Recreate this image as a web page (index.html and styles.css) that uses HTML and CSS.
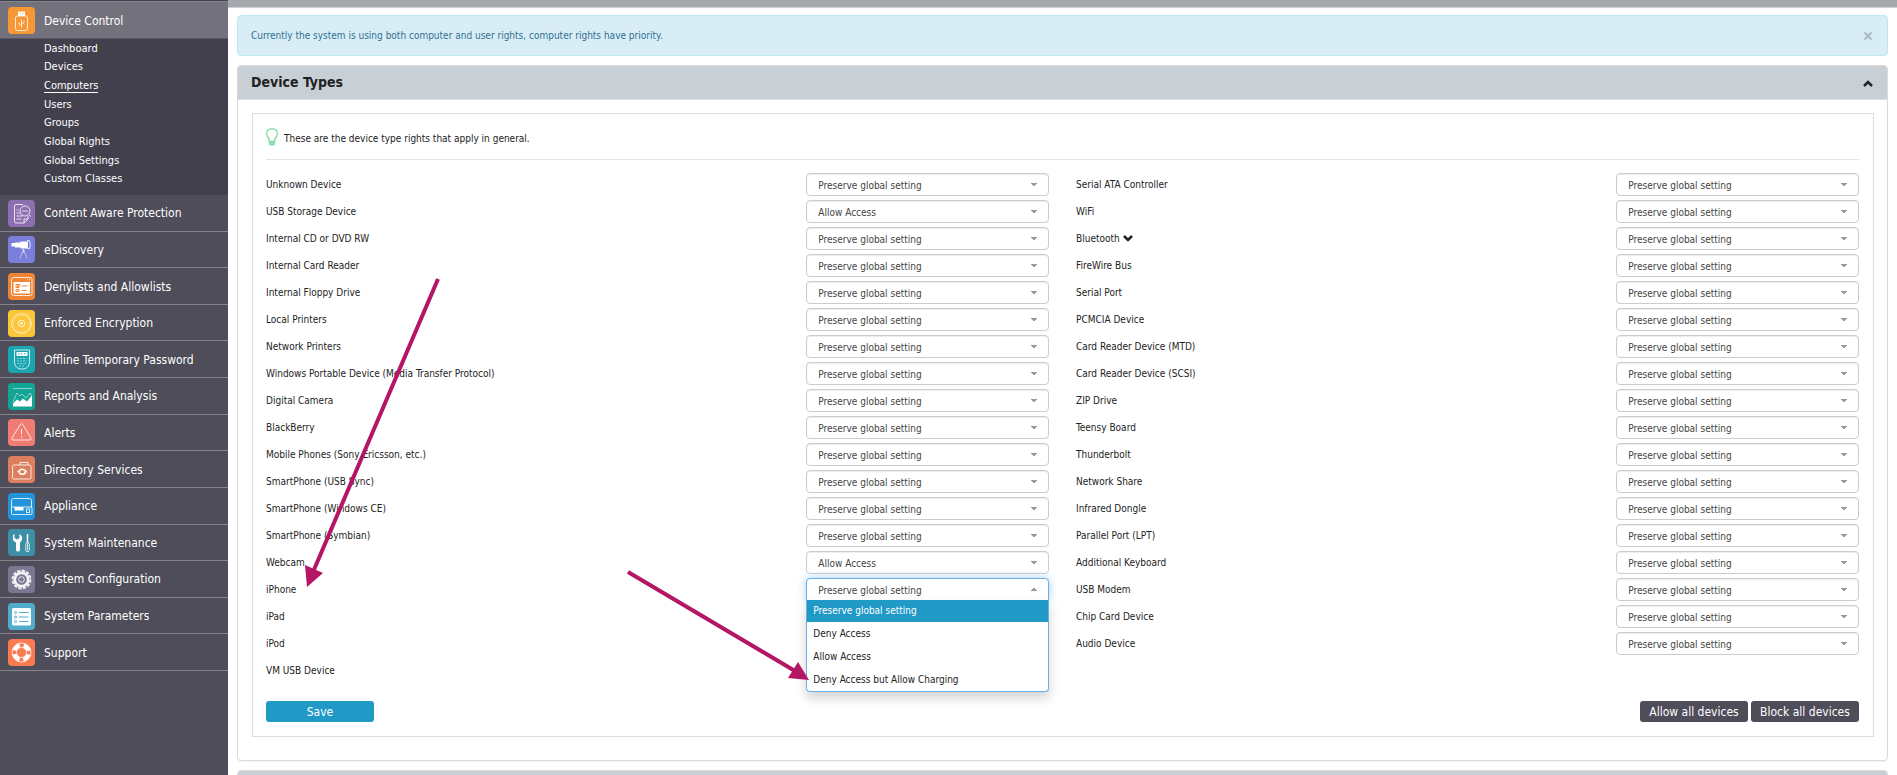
FILE: index.html
```html
<!DOCTYPE html>
<html lang="en">
<head>
<meta charset="utf-8">
<title>Device Control - Computers</title>
<link rel="stylesheet" href="styles.css">
</head>
<body>
<div class="app">
  <nav class="sidebar">
    <a class="item active" href="#">
      <svg class="icon orange" viewBox="0 0 27 27"><path d="M10 9V4.500h7V9" fill="#fff"/><path d="M11.500 6.500h1M14.500 6.500h1" stroke="#f79736"/><rect x="7.500" y="9" width="12" height="14.500" rx="2" class="soft"/><path d="M13.500 20.500v-8M13.500 18.500l-2.500-1.500v-1.500M13.500 17l2.500-1.500V14" class="soft"/></svg>
      Device Control</a>
    <div class="submenu">
      <a href="#">Dashboard</a>
      <a href="#">Devices</a>
      <a class="current" href="#">Computers</a>
      <a href="#">Users</a>
      <a href="#">Groups</a>
      <a href="#">Global Rights</a>
      <a href="#">Global Settings</a>
      <a href="#">Custom Classes</a>
    </div>
    <div class="menu">
      <a class="item" href="#">
        <svg class="icon purple" viewBox="0 0 27 27"><path d="M15 4.500H8a1.500 1.500 0 0 0-1.500 1.500v15.500A1.500 1.500 0 0 0 8 23h8l4-4v-3M16 23v-4h4" class="soft"/><circle cx="17" cy="11" r="5" class="soft"/><path d="M14 11h6M8.500 10h2M8.500 13h3M8.500 16h6M8.500 19h5M20.500 14.500l2.500 2" class="soft"/></svg>
        Content Aware Protection</a>
      <a class="item" href="#">
        <svg class="icon violet" viewBox="0 0 27 27"><path d="M3.500 7h4v3.500h-4zM7 6.500h6v5H7zM12.500 5.500h7v7h-7z" fill="#fff"/><path d="M19.500 4.500h2q1.500 4.500 0 8h-2z" class="soft"/><path d="M15.500 13l-3.500 9.500M15.500 13l3.500 9.500M15.500 13v4" class="soft faint"/></svg>
        eDiscovery</a>
      <a class="item" href="#">
        <svg class="icon tangerine" viewBox="0 0 27 27"><rect x="3.500" y="4.500" width="20.500" height="18" rx="2" class="soft"/><path d="M5.500 9h16.500v11.500H5.500z" fill="#fff"/><path d="M19 6.700h1M21 6.700h1" class="soft"/><path d="M8 11.500h3v3H8zM8 16.500h3v2H8zM13.500 13h6M13.500 17.500h5M9 12.500l1 1.500 2.500-3.500" fill="none" stroke="#ef8535"/></svg>
        Denylists and Allowlists</a>
      <a class="item" href="#">
        <svg class="icon yellow" viewBox="0 0 27 27"><circle cx="13.500" cy="13.500" r="9.800" class="soft"/><circle cx="13.500" cy="13.500" r="8" class="soft" stroke-dasharray="1 2"/><circle cx="13.500" cy="13.500" r="3.300" class="soft"/><circle cx="13.500" cy="13.500" r="1.200" fill="#fff"/></svg>
        Enforced Encryption</a>
      <a class="item" href="#">
        <svg class="icon teal" viewBox="0 0 27 27"><path d="M6.500 4h15v11.500c0 5-3 7.500-7.500 7.500s-7.500-2.500-7.500-7.500z" class="soft"/><path d="M8.500 6h11v4h-11z" fill="#fff"/><path d="M10 8h1.500M13 8h1.500M16 8h1.500" stroke="#1aa5b0"/><path d="M9 12.500h10M9 15h10M9.500 17.500h9M11 20h6" class="soft faint" stroke-dasharray="2 1"/></svg>
        Offline Temporary Password</a>
      <a class="item" href="#">
        <svg class="icon green" viewBox="0 0 27 27"><path d="M5 5.500h19" class="soft faint"/><path d="M5 19l4-9 3 3 2-2 4 4 4-5 2 3" class="soft faint"/><path d="M5 23.500v-3l4-4 3 2 3-3 4 3 5-6v11z" fill="#fff"/></svg>
        Reports and Analysis</a>
      <a class="item" href="#">
        <svg class="icon coral" viewBox="0 0 27 27"><path d="M12.300 5.500q1.200-1.500 2.400 0l8.300 13.500q.500 2-1 2H5q-1.500 0-1-2z" class="soft"/><path d="M13.500 10v5.500M13.500 17v1.500" class="soft"/></svg>
        Alerts</a>
      <a class="item" href="#">
        <svg class="icon clay" viewBox="0 0 27 27"><rect x="4.500" y="9" width="18.500" height="14" rx="1.500" class="soft"/><path d="M12 9V6.500h8V9" class="soft"/><path d="M11 15a3.500 3 0 0 1 6-.500M17.500 16.500a3.500 3 0 0 1-6 .500" fill="none" stroke="#fff" stroke-width="1.600"/><path d="M9 15h3.500l-1.500 2.500zM16 16.500h3.500L17.700 13.500z" fill="#fff"/></svg>
        Directory Services</a>
      <a class="item" href="#">
        <svg class="icon blue" viewBox="0 0 27 27"><path d="M3.500 14.500v-7q0-2 2-2h16q2 0 2 2v7" class="soft"/><rect x="3.500" y="14" width="20.500" height="7.500" rx="1" class="soft"/><path d="M6.500 14h9v3.500h-9z" fill="#fff"/><rect x="18.500" y="16" width="3" height="3.500" class="soft"/></svg>
        Appliance</a>
      <a class="item" href="#">
        <svg class="icon steel" viewBox="0 0 27 27"><path d="M5 6l1.500-1v4l2.500 1.500L11.500 9V5q3.500 2.500 2.500 5.500-.500 2-2 3V21q0 1.500-2 1.500T8 21v-7.500q-2.500-1-3-3Q4.500 8 5 6z" fill="#fff"/><path d="M19.500 5v9" stroke="#fff" stroke-width="1.500"/><rect x="17.800" y="14" width="3.500" height="8.500" rx="1.200" class="soft"/><path d="M19.500 15v6" class="soft"/></svg>
        System Maintenance</a>
      <a class="item" href="#">
        <svg class="icon grey" viewBox="0 0 27 27"><circle cx="13.500" cy="13.500" r="9" fill="none" stroke="#f2f2f5" stroke-width="1.800" stroke-dasharray="3.200 1.510"/><circle cx="13.500" cy="13.500" r="6.800" fill="none" stroke="#f2f2f5" stroke-width="3"/><circle cx="13.500" cy="13.500" r="2.800" class="soft"/></svg>
        System Configuration</a>
      <a class="item" href="#">
        <svg class="icon sky" viewBox="0 0 27 27"><rect x="4" y="5" width="19" height="17.500" rx="1.500" fill="#fff"/><path d="M11 9.500h9.500M11 14h9.500M11 18.500h9.500" stroke="#4fadcb"/><g fill="none" stroke="#4fadcb"><circle cx="7.500" cy="9.500" r="1"/><circle cx="7.500" cy="14" r="1"/><circle cx="7.500" cy="18.500" r="1"/></g></svg>
        System Parameters</a>
      <a class="item" href="#">
        <svg class="icon red" viewBox="0 0 27 27"><circle cx="13.500" cy="13.500" r="9.500" class="soft"/><circle cx="13.500" cy="13.500" r="5" class="soft"/><circle cx="13.500" cy="13.500" r="7.300" fill="none" stroke="#fff" stroke-width="4" stroke-dasharray="7.500 3.960" stroke-dashoffset="-2"/></svg>
        Support</a>
    </div>
  </nav>

  <main class="main">
    <div class="topbar"></div>
    <div class="content">
      <div class="alert" role="alert">
        <span>Currently the system is using both computer and user rights, computer rights have priority.</span>
        <button class="close" type="button" aria-label="Close"><svg viewBox="0 0 10 10"><path d="M1.500 1.500l7 7M8.500 1.500l-7 7"/></svg></button>
      </div>

      <section class="panel">
        <header class="panel-head">
          <h2>Device Types</h2>
          <button class="collapse" type="button" aria-label="Collapse"><svg viewBox="0 0 10 8"><path d="M1 6l4-4 4 4"/></svg></button>
        </header>
        <form class="rights">
          <p class="hint"><svg class="bulb" viewBox="0 0 12 18"><path d="M3.500 13.500q0-2.500-1.500-4.500Q.700 7.500.700 5.500.700.800 6 .800t5.300 4.700q0 2-1.300 3.500-1.500 2-1.500 4.500z"/><path d="M3.500 13.500V15q0 2 2.500 2t2.500-2v-1.500M3.500 15h5"/></svg>These are the device type rights that apply in general.</p>
          <div class="columns">
            <div class="column">
              <div class="row"><label for="d1">Unknown Device</label><select id="d1"><option>Preserve global setting</option></select></div>
              <div class="row"><label for="d2">USB Storage Device</label><select id="d2"><option>Allow Access</option></select></div>
              <div class="row"><label for="d3">Internal CD or DVD RW</label><select id="d3"><option>Preserve global setting</option></select></div>
              <div class="row"><label for="d4">Internal Card Reader</label><select id="d4"><option>Preserve global setting</option></select></div>
              <div class="row"><label for="d5">Internal Floppy Drive</label><select id="d5"><option>Preserve global setting</option></select></div>
              <div class="row"><label for="d6">Local Printers</label><select id="d6"><option>Preserve global setting</option></select></div>
              <div class="row"><label for="d7">Network Printers</label><select id="d7"><option>Preserve global setting</option></select></div>
              <div class="row"><label for="d8">Windows Portable Device (Media Transfer Protocol)</label><select id="d8"><option>Preserve global setting</option></select></div>
              <div class="row"><label for="d9">Digital Camera</label><select id="d9"><option>Preserve global setting</option></select></div>
              <div class="row"><label for="d10">BlackBerry</label><select id="d10"><option>Preserve global setting</option></select></div>
              <div class="row"><label for="d11">Mobile Phones (Sony Ericsson, etc.)</label><select id="d11"><option>Preserve global setting</option></select></div>
              <div class="row"><label for="d12">SmartPhone (USB Sync)</label><select id="d12"><option>Preserve global setting</option></select></div>
              <div class="row"><label for="d13">SmartPhone (Windows CE)</label><select id="d13"><option>Preserve global setting</option></select></div>
              <div class="row"><label for="d14">SmartPhone (Symbian)</label><select id="d14"><option>Preserve global setting</option></select></div>
              <div class="row"><label for="d15">Webcam</label><select id="d15"><option>Allow Access</option></select></div>
              <div class="row open"><label for="d16">iPhone</label><select id="d16"><option>Preserve global setting</option><option>Deny Access</option><option>Allow Access</option><option>Deny Access but Allow Charging</option></select>
                <ul class="options" role="listbox">
                  <li class="selected" role="option" aria-selected="true">Preserve global setting</li>
                  <li role="option">Deny Access</li>
                  <li role="option">Allow Access</li>
                  <li role="option">Deny Access but Allow Charging</li>
                </ul>
              </div>
              <div class="row"><span>iPad</span></div>
              <div class="row"><span>iPod</span></div>
              <div class="row"><span>VM USB Device</span></div>
            </div>
            <div class="column">
              <div class="row"><label for="e1">Serial ATA Controller</label><select id="e1"><option>Preserve global setting</option></select></div>
              <div class="row"><label for="e2">WiFi</label><select id="e2"><option>Preserve global setting</option></select></div>
              <div class="row"><label for="e3">Bluetooth <svg class="more" viewBox="0 0 10 8"><path d="M1 2l4 4 4-4"/></svg></label><select id="e3"><option>Preserve global setting</option></select></div>
              <div class="row"><label for="e4">FireWire Bus</label><select id="e4"><option>Preserve global setting</option></select></div>
              <div class="row"><label for="e5">Serial Port</label><select id="e5"><option>Preserve global setting</option></select></div>
              <div class="row"><label for="e6">PCMCIA Device</label><select id="e6"><option>Preserve global setting</option></select></div>
              <div class="row"><label for="e7">Card Reader Device (MTD)</label><select id="e7"><option>Preserve global setting</option></select></div>
              <div class="row"><label for="e8">Card Reader Device (SCSI)</label><select id="e8"><option>Preserve global setting</option></select></div>
              <div class="row"><label for="e9">ZIP Drive</label><select id="e9"><option>Preserve global setting</option></select></div>
              <div class="row"><label for="e10">Teensy Board</label><select id="e10"><option>Preserve global setting</option></select></div>
              <div class="row"><label for="e11">Thunderbolt</label><select id="e11"><option>Preserve global setting</option></select></div>
              <div class="row"><label for="e12">Network Share</label><select id="e12"><option>Preserve global setting</option></select></div>
              <div class="row"><label for="e13">Infrared Dongle</label><select id="e13"><option>Preserve global setting</option></select></div>
              <div class="row"><label for="e14">Parallel Port (LPT)</label><select id="e14"><option>Preserve global setting</option></select></div>
              <div class="row"><label for="e15">Additional Keyboard</label><select id="e15"><option>Preserve global setting</option></select></div>
              <div class="row"><label for="e16">USB Modem</label><select id="e16"><option>Preserve global setting</option></select></div>
              <div class="row"><label for="e17">Chip Card Device</label><select id="e17"><option>Preserve global setting</option></select></div>
              <div class="row"><label for="e18">Audio Device</label><select id="e18"><option>Preserve global setting</option></select></div>
            </div>
          </div>
          <div class="actions">
            <button class="btn primary" type="button">Save</button>
            <div class="bulk">
              <button class="btn" type="button">Allow all devices</button>
              <button class="btn" type="button">Block all devices</button>
            </div>
          </div>
        </form>
      </section>

      <section class="panel"><header class="panel-head"></header></section>
    </div>
  </main>

  <svg class="arrows" width="900" height="720" viewBox="0 0 900 720" aria-hidden="true">
    <path d="M438 279L313 572M628 572L795 671" stroke="#b41565" stroke-width="4"/>
    <path d="M307 587l-2-22 18 8zM809 680l-11-18-10 16z" fill="#b41565"/>
  </svg>
</div>
</body>
</html>
```
FILE: styles.css
```css
* { box-sizing: border-box; }

body {
  margin: 0;
  font-family: "DejaVu Sans Condensed", Tahoma, sans-serif;
  font-size: 10px;
  color: #222;
  background: #fff;
}

.app {
  position: relative;
  display: flex;
  height: 100vh;
  overflow: hidden;
}

/* Sidebar */
.sidebar {
  flex: 0 0 228px;
  background: #4e4d59;
  border-top: 1px solid #42404d;
}
.sidebar a { color: #fff; text-decoration: none; }
.item {
  display: flex;
  align-items: center;
  gap: 9px;
  padding: 1px 8px 0;
  font-size: 12px;
  border-bottom: 1px solid #85848d;
}
.item.active {
  height: 38px;
  background: #73727c;
  border-top: 1px solid #85848d;
  border-bottom-color: #5a5964;
}
.submenu {
  display: grid;
  grid-auto-rows: 1fr;
  height: 156px;
  padding: 0 0 7px 44px;
  background: #42404d;
  font-size: 11px;
}
.submenu a { align-self: center; justify-self: start; line-height: 13px; }
.submenu .current { border-bottom: 1px solid #fff; }
.menu {
  display: grid;
  grid-auto-rows: 1fr;
  height: 476px;
}

.icon { flex: none; width: 27px; height: 27px; border-radius: 4px; }
.soft { fill: none; stroke: #fff; stroke-opacity: 0.8; }
.faint { stroke-opacity: 0.5; }
.orange { background: #f79736; }
.purple { background: #8c6fae; }
.violet { background: #7b7fdc; }
.tangerine { background: #ef8535; }
.yellow { background: #fbc639; }
.teal { background: #1aa5b0; }
.green { background: #12a594; }
.coral { background: #f07c73; }
.clay { background: #dd7f5e; }
.blue { background: #2394dc; }
.steel { background: #3c8fa6; }
.grey { background: #7a7890; }
.sky { background: #4fadcb; }
.red { background: #fb7b50; }

/* Main area */
.main { flex: 1; min-width: 0; }
.topbar { height: 8px; background: #a5a8ad; border-bottom: 1px solid #d0d2d5; }
.content {
  display: flex;
  flex-direction: column;
  gap: 9px;
  padding: 7px 9px 0;
}

.alert {
  display: flex;
  align-items: center;
  justify-content: space-between;
  height: 41px;
  padding: 0 14px 0 13px;
  color: #31708f;
  background: #d9edf7;
  border: 1px solid #bce8f1;
  border-radius: 4px;
}
.close, .collapse { padding: 0; border: 0; background: none; }
.close svg, .collapse svg { display: block; width: 10px; }
.close path { stroke: #a9bac4; stroke-width: 2; }
.collapse path, .more path { fill: none; stroke: #222; stroke-width: 2.500; }

.panel {
  border: 1px solid #d8dadc;
  border-radius: 4px;
  box-shadow: 0 1px 1px rgba(0, 0, 0, 0.05);
}
.panel-head {
  display: flex;
  align-items: center;
  justify-content: space-between;
  height: 34px;
  padding: 0 14px 0 13px;
  background: #c8cfd5;
  border-bottom: 1px solid #dddfe1;
  border-radius: 3px 3px 0 0;
}
.panel-head h2 { margin: 0; padding-bottom: 2px; font-size: 14px; }
.collapse { padding-top: 2px; }

.rights {
  margin: 13px 13px 23px 14px;
  padding: 0 14px 14px 13px;
  border: 1px solid #ddd;
}
.hint {
  display: flex;
  align-items: center;
  gap: 6px;
  height: 46px;
  margin: 0 0 11px;
  padding-top: 4px;
  border-bottom: 1px solid #e5e5e5;
}
.bulb { width: 12px; height: 18px; margin-bottom: 4px; fill: none; stroke: #7fd8a4; stroke-width: 1.300; }

.columns { display: grid; grid-template-columns: 1fr 1fr; gap: 27px; }
.row {
  position: relative;
  display: flex;
  align-items: center;
  justify-content: space-between;
  height: 27px;
}
.more { width: 10px; height: 8px; }

select {
  appearance: none;
  width: 31%;
  height: 23px;
  padding: 2px 24px 0 11px;
  font: inherit;
  color: #444;
  border: 1px solid #ccc;
  border-radius: 4px;
  background:
    conic-gradient(from -45deg at 50% 100%, #999 90deg, transparent 0) right 11px top 9px / 6px 3px no-repeat,
    #fff;
  box-shadow: inset 0 1px 1px rgba(0, 0, 0, 0.075);
}
.row:not(.open) select {
  background:
    linear-gradient(#999, #999) right 11px top 9px / 6px 1px no-repeat,
    linear-gradient(#999, #999) right 12px top 10px / 4px 1px no-repeat,
    linear-gradient(#999, #999) right 13px top 11px / 2px 1px no-repeat,
    #fff;
}
.open select {
  border-color: #66afe9;
  border-radius: 4px 4px 0 0;
  background:
    linear-gradient(#999, #999) right 13px top 9px / 2px 1px no-repeat,
    linear-gradient(#999, #999) right 12px top 10px / 4px 1px no-repeat,
    linear-gradient(#999, #999) right 11px top 11px / 6px 1px no-repeat,
    #fff;
  box-shadow: 0 0 8px rgba(102, 175, 233, 0.6);
}
.options {
  position: absolute;
  top: 24px;
  right: 0;
  z-index: 2;
  display: grid;
  gap: 1px;
  width: 31%;
  margin: 0;
  padding: 0;
  list-style: none;
  background: #fff;
  border: 1px solid #66afe9;
  border-top: 0;
  border-radius: 0 0 4px 4px;
  box-shadow: 0 6px 12px rgba(0, 0, 0, 0.18);
}
.options li { padding: 0 6px; line-height: 22px; }
.options .selected { color: #fff; background: #2199c7; }

.actions {
  display: flex;
  justify-content: space-between;
  margin-top: 17px;
}
.bulk { display: flex; gap: 3px; }
.btn {
  width: 108px;
  height: 21px;
  padding: 0;
  font: inherit;
  font-size: 12px;
  color: #fff;
  background: #4e4d59;
  border: 0;
  border-radius: 3px;
}
.btn.primary { background: #2199c7; }

.arrows {
  position: absolute;
  top: 0;
  left: 0;
  z-index: 3;
  pointer-events: none;
}
```
